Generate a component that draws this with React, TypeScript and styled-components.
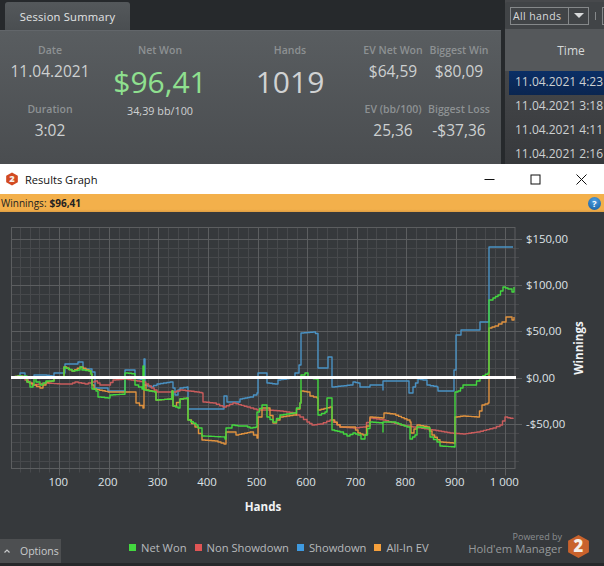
import React from "react";
import styled, { createGlobalStyle } from "styled-components";

const GlobalStyle = createGlobalStyle`
  html, body {
    margin: 0;
    padding: 0;
    width: 604px;
    height: 566px;
    overflow: hidden;
    background: #36393c;
    font-family: "Open Sans", "Liberation Sans", sans-serif;
  }
`;

const Page = styled.div`
  width: 604px;
  height: 566px;
  display: flex;
  flex-direction: column;
  overflow: hidden;
`;

const Session = styled.div`
  height: 164px;
  display: flex;
  background: #26292c;
  overflow: hidden;
  flex: none;
`;

const SummaryColumn = styled.div`
  width: 501px;
  display: flex;
  flex-direction: column;
`;

const TabBar = styled.div`
  height: 30px;
  padding: 2px 0 0 5px;
  box-sizing: border-box;
  display: flex;
`;

const Tab = styled.div`
  width: 125px;
  display: flex;
  align-items: center;
  justify-content: center;
  background: linear-gradient(#54585b, #4a4e51);
  border-radius: 3px 3px 0 0;
  color: #e2e4e5;
  font-size: 11.2px;
  letter-spacing: 0.2px;
`;

const SummaryPanel = styled.div`
  flex: 1;
  display: grid;
  grid-template-columns: 100px 120px 140px 66px 66px;
  grid-template-rows: 59px 53px;
  padding-top: 11px;
  background: linear-gradient(#595d60, #4a4d50);
  border-top: 1px solid #62666a;
  box-sizing: border-box;
`;

const Stat = styled.div<{ $tall?: boolean; $column?: number; $row?: number }>`
  display: flex;
  flex-direction: column;
  align-items: center;
  grid-column: ${(p) => p.$column ?? "auto"};
  grid-row: ${(p) => (p.$tall ? "1 / span 2" : p.$row ?? "auto")};
`;

const StatLabel = styled.div`
  color: #8d9193;
  font-size: 10.5px;
  font-weight: 600;
  line-height: 16px;
  white-space: nowrap;
`;

const StatValue = styled.div`
  color: #cdd0d1;
  font-size: 15.5px;
  line-height: 26px;
  white-space: nowrap;
`;

const BigValue = styled.div<{ $green?: boolean }>`
  color: ${(p) => (p.$green ? "#8fe08f" : "#d0d2d3")};
  font-size: 30px;
  line-height: 42px;
  margin-top: 3px;
`;

const BigNote = styled.div`
  color: #cfd1d2;
  font-size: 10.8px;
  line-height: 16px;
`;

const SessionList = styled.div`
  width: 99px;
  margin-left: 4px;
  display: flex;
  flex-direction: column;
  overflow: hidden;
  background: #47494c;
`;

const Toolbar = styled.div`
  height: 27px;
  flex: none;
  margin-top: 2px;
  padding-left: 5px;
  display: flex;
  align-items: center;
  background: #414447;
  border-radius: 3px 0 0 3px;
  box-sizing: border-box;
`;

const Select = styled.div`
  height: 18px;
  width: 79px;
  flex: none;
  display: flex;
  border: 1px solid #85888a;
  box-sizing: border-box;
  color: #d8dadb;
  font-size: 10.5px;
  letter-spacing: 0.4px;
`;

const SelectText = styled.div`
  flex: 1;
  line-height: 16px;
  padding-left: 2px;
  white-space: nowrap;
`;

const SelectArrow = styled.div`
  width: 19px;
  border-left: 1px solid #85888a;
  display: flex;
  align-items: center;
  justify-content: center;
  &::after {
    content: "";
    border-style: solid;
    border-width: 5px 5px 0;
    border-color: #d8dadb transparent transparent;
  }
`;

const ToolSeparator = styled.div`
  width: 1px;
  height: 8px;
  margin: 0 6px;
  flex: none;
  background: #85888a;
`;

const ToolStub = styled.div`
  width: 18px;
  height: 18px;
  flex: none;
  border: 1px solid #85888a;
  box-sizing: border-box;
`;

const ListHeader = styled.div`
  height: 42px;
  flex: none;
  display: flex;
  align-items: center;
  justify-content: center;
  padding-left: 33px;
  background: #55585b;
  color: #d6d8d9;
  font-size: 12px;
`;

const Rows = styled.div`
  padding-left: 4px;
  background: linear-gradient(#45474a, #36383b);
  flex: 1;
`;

const Row = styled.div<{ $selected?: boolean }>`
  height: 24px;
  line-height: 22px;
  padding-left: 6px;
  white-space: nowrap;
  font-size: 12px;
  color: #cdd0d1;
  background: ${(p) => (p.$selected ? "linear-gradient(#0b2f66, #0a2550)" : "transparent")};
`;

const Window = styled.div`
  flex: 1;
  display: flex;
  flex-direction: column;
  min-height: 0;
`;

const TitleBar = styled.div`
  height: 30px;
  flex: none;
  display: flex;
  align-items: center;
  padding-left: 5px;
  background: #ffffff;
  color: #111111;
  font-size: 11.1px;
  gap: 6px;
`;

const WindowButtons = styled.div`
  margin-left: auto;
  display: flex;
`;

const WindowButton = styled.div`
  width: 46px;
  height: 30px;
  display: flex;
  align-items: center;
  justify-content: center;
`;

const InfoBar = styled.div`
  height: 18px;
  flex: none;
  display: flex;
  align-items: center;
  padding: 0 3px 0 1px;
  background: linear-gradient(#f3b04b 85%, #dd9d42);
  color: #222222;
  font-size: 10px;
  gap: 3px;
`;

const InfoValue = styled.span`
  font-weight: 700;
`;

const HelpBadge = styled.div`
  margin-left: auto;
  width: 13px;
  height: 13px;
  border-radius: 50%;
  background: radial-gradient(circle at 50% 30%, #4f9fe0, #125a9e);
  color: #ffffff;
  font-size: 9px;
  font-weight: 700;
  line-height: 13px;
  text-align: center;
`;

const ChartArea = styled.svg`
  display: block;
  width: 604px;
  height: 319px;
  flex: none;
`;

const AxisText = styled.text`
  fill: #dfe3e7;
  font-size: 11.4px;
  font-family: "Open Sans", "Liberation Sans", sans-serif;
`;

const AxisTitle = styled.text`
  fill: #f0f2f4;
  font-size: 11.6px;
  font-weight: 700;
  font-family: "Open Sans", "Liberation Sans", sans-serif;
`;

const Footer = styled.div`
  height: 32px;
  flex: none;
  display: flex;
  align-items: flex-end;
`;

const OptionsButton = styled.div`
  width: 61px;
  height: 24px;
  flex: none;
  display: flex;
  align-items: center;
  gap: 9px;
  padding-left: 3px;
  box-sizing: border-box;
  background: #4d4f51;
  color: #c9cbcc;
  font-size: 10.5px;
`;

const Legend = styled.div`
  display: flex;
  align-items: center;
  gap: 8px;
  margin-left: 68px;
  height: 24px;
  padding-bottom: 7px;
  box-sizing: border-box;
`;

const LegendItem = styled.div`
  display: flex;
  align-items: center;
  gap: 5px;
  color: #b7babc;
  font-size: 11.2px;
  white-space: nowrap;
`;

const Swatch = styled.span<{ $color: string }>`
  width: 7px;
  height: 7px;
  background: ${(p) => p.$color};
`;

const Brand = styled.div`
  margin-left: auto;
  padding-right: 13px;
  display: flex;
  align-items: center;
  gap: 4px;
  height: 30px;
  align-self: flex-start;
`;

const BrandText = styled.div`
  display: flex;
  flex-direction: column;
  align-items: flex-end;
  align-self: flex-start;
`;

const PoweredBy = styled.div`
  color: #8b8e90;
  font-size: 9px;
  line-height: 12px;
`;

const BrandName = styled.div`
  color: #96999b;
  font-size: 11.3px;
  line-height: 12px;
  white-space: nowrap;
`;

const BottomEdge = styled.div`
  height: 3px;
  flex: none;
  background: #26282a;
`;

const GREEN = "#43d83f";
const RED = "#c95c5c";
const BLUE = "#4a92c4";
const ORANGE = "#e0923f";

type Pt = [number, number];

const netWon: Pt[] = [
  [12, 377], [18, 376], [22, 378], [24, 376], [27, 382], [30, 387], [33, 385], [34, 378], [36, 382], [40, 385], [46, 381],
  [52, 381], [54, 378], [62, 378], [64, 367], [65, 368], [72, 371], [78, 370], [80, 367], [82, 370], [89, 371], [91, 374],
  [92, 389], [96, 391], [98, 397], [108, 398], [110, 395], [125, 394], [125, 373], [135, 374], [135, 385], [142, 389],
  [143, 366], [144, 390], [155, 392], [156, 400], [170, 399], [172, 391], [173, 406], [178, 408], [180, 399], [187, 398],
  [188, 420], [196, 425], [198, 428], [202, 436], [224, 437], [225, 439], [226, 428], [230, 428], [232, 425], [238, 426],
  [245, 426], [250, 428], [256, 427], [257, 412], [262, 405], [266, 405], [267, 417], [273, 422], [280, 415], [293, 413],
  [300, 403], [301, 375], [305, 373], [308, 378], [316, 379], [318, 415], [325, 412], [327, 398], [331, 398], [332, 430],
  [340, 432], [347, 436], [353, 433], [358, 435], [361, 439], [365, 435], [370, 422], [382, 423], [383, 432], [383, 422],
  [393, 422], [407, 427], [409, 427], [410, 439], [415, 435], [417, 427], [427, 428], [430, 437], [437, 442], [440, 446],
  [454, 447], [455, 392], [458, 391], [463, 385], [473, 385], [480, 377], [488, 373], [489, 300], [493, 298], [498, 295],
  [503, 287], [508, 289], [512, 292], [514, 287],
];

const showdown: Pt[] = [
  [12, 377], [20, 377], [20, 373], [24, 373], [25, 378], [33, 378], [34, 375], [44, 375], [52, 376], [54, 373], [63, 373],
  [65, 364], [75, 364], [78, 362], [82, 362], [83, 369], [90, 369], [92, 372], [95, 388], [107, 388], [108, 391], [125, 391],
  [125, 370], [135, 370], [135, 378], [143, 380], [144, 359], [145, 359], [145, 385], [150, 387], [157, 384], [170, 382],
  [173, 388], [175, 395], [178, 390], [180, 388], [187, 387], [188, 409], [222, 409], [224, 396], [227, 402], [236, 402],
  [240, 399], [245, 398], [250, 397], [257, 393], [258, 373], [266, 373], [267, 383], [275, 384], [278, 380], [292, 378],
  [295, 373], [299, 365], [301, 333], [313, 332], [318, 335], [318, 368], [326, 368], [328, 357], [331, 357], [332, 387],
  [350, 385], [353, 382], [358, 383], [360, 387], [367, 387], [370, 385], [380, 385], [383, 390], [383, 381], [407, 381],
  [409, 393], [413, 387], [418, 379], [423, 380], [427, 385], [437, 387], [438, 391], [453, 391], [454, 370], [456, 335],
  [460, 335], [461, 330], [478, 330], [480, 322], [489, 322], [489, 247], [513, 247],
];

const nonShowdown: Pt[] = [
  [12, 377], [20, 376], [25, 380], [32, 385], [45, 383], [60, 384], [70, 384], [75, 382], [85, 384], [95, 381], [100, 385],
  [108, 385], [113, 380], [125, 379], [143, 382], [157, 392], [173, 392], [180, 390], [197, 392], [202, 393], [203, 402],
  [213, 403], [223, 407], [233, 403], [247, 407], [257, 410], [267, 410], [280, 411], [293, 413], [300, 417], [307, 422],
  [312, 425], [320, 424], [330, 420], [340, 427], [353, 428], [363, 427], [370, 418], [383, 420], [400, 425], [413, 427],
  [433, 430], [450, 433], [463, 434], [477, 432], [493, 428], [500, 425], [505, 417], [513, 419],
];

const allInEv: Pt[] = [
  [12, 377], [18, 376], [24, 377], [27, 382], [33, 385], [40, 388], [46, 382], [52, 381], [54, 378], [62, 378], [64, 367],
  [72, 371], [80, 367], [89, 371], [91, 374], [92, 385], [94, 389], [108, 392], [125, 392], [135, 392], [136, 403], [143, 408],
  [144, 408], [144, 385], [146, 390], [155, 392], [156, 400], [170, 399], [172, 391], [173, 406], [180, 399], [187, 398],
  [188, 420], [195, 427], [202, 440], [215, 441], [224, 444], [226, 432], [232, 432], [236, 435], [250, 432], [257, 438],
  [258, 417], [262, 408], [267, 408], [273, 423], [280, 417], [293, 415], [300, 403], [301, 391], [307, 392], [310, 396],
  [317, 398], [318, 410], [330, 407], [332, 420], [340, 427], [353, 427], [358, 433], [363, 435], [370, 417], [382, 418],
  [384, 413], [393, 414], [407, 420], [410, 422], [411, 433], [417, 425], [427, 427], [432, 435], [440, 442], [453, 443],
  [455, 417], [463, 416], [477, 417], [482, 405], [488, 403], [489, 328], [495, 326], [502, 322], [506, 317], [510, 317],
  [512, 320], [514, 317],
];

const stepPath = (pts: Pt[]) => {
  let d = `M${pts[0][0]} ${pts[0][1]}`;
  for (let i = 1; i < pts.length; i++) {
    const [x0, y0] = pts[i - 1];
    const [x1, y1] = pts[i];
    const n = Math.max(1, Math.round((x1 - x0) / 3));
    for (let k = 1; k <= n; k++) {
      d += `H${(x0 + ((x1 - x0) * k) / n).toFixed(1)}V${(y0 + ((y1 - y0) * k) / n).toFixed(1)}`;
    }
  }
  return d;
};

const PLOT = { left: 11.5, right: 515, top: 227.5, bottom: 468.5 };
const xAt = (hands: number) => 9.75 + hands * 0.4955;
const yAt = (money: number) => 377.5 - money * 0.924;

const xMinor = Array.from({ length: 50 }, (_, i) => (i + 1) * 20).filter((h) => h % 100 !== 0);
const xMajor = [100, 200, 300, 400, 500, 600, 700, 800, 900, 1000];
const yMinor = Array.from({ length: 25 }, (_, i) => -90 + i * 10).filter((m) => m % 50 !== 0);
const yMajor = [150, 100, 50, 0, -50];
const yLabels = ["$150,00", "$100,00", "$50,00", "$0,00", "-$50,00"];
const xLabels = ["100", "200", "300", "400", "500", "600", "700", "800", "900", "1 000"];

const Graph = () => (
  <ChartArea viewBox="0 212 604 319">
    <g stroke="#47494c" strokeWidth="1" fill="none">
      {xMinor.map((h) => (
        <path key={h} d={`M${Math.round(xAt(h)) + 0.5} ${PLOT.top}V${PLOT.bottom + 4}`} />
      ))}
      {yMinor.map((m) => (
        <path key={m} d={`M${PLOT.left} ${Math.round(yAt(m)) + 0.5}H${PLOT.right + 4}`} />
      ))}
    </g>
    <g stroke="#5c5e60" strokeWidth="1" fill="none">
      {xMajor.map((h) => (
        <path key={h} d={`M${Math.round(xAt(h)) + 0.5} ${PLOT.top}V${PLOT.bottom + 7}`} />
      ))}
      {yMajor.map((m) => (
        <path key={m} d={`M${PLOT.left} ${Math.round(yAt(m)) + 0.5}H${PLOT.right + 7}`} />
      ))}
      <rect x={PLOT.left} y={PLOT.top} width={PLOT.right - PLOT.left} height={PLOT.bottom - PLOT.top} />
    </g>
    <g fill="none" strokeWidth="1.4" strokeLinejoin="round">
      <path d={stepPath(showdown)} stroke={BLUE} />
      <path d={stepPath(nonShowdown)} stroke={RED} />
      <path d={stepPath(allInEv)} stroke={ORANGE} />
      <path d={stepPath(netWon)} stroke={GREEN} />
    </g>
    <rect x={11} y={376} width={505} height={3} fill="#ffffff" />
    {xLabels.map((label, i) => (
      <AxisText key={label} x={xAt(xMajor[i]) - 1} y={486} textAnchor="middle">
        {label}
      </AxisText>
    ))}
    {yLabels.map((label, i) => (
      <AxisText key={label} x={526} y={yAt(yMajor[i]) + 4}>
        {label}
      </AxisText>
    ))}
    <AxisTitle x={263} y={511} textAnchor="middle">
      Hands
    </AxisTitle>
    <AxisTitle x={0} y={0} textAnchor="middle" transform="translate(583 348) rotate(-90)">
      Winnings
    </AxisTitle>
  </ChartArea>
);

const Logo = ({ size, color }: { size: number; color: string }) => (
  <svg width={size} height={size} viewBox="0 0 24 24">
    <polygon points="12,1 22,6.5 22,17.5 12,23 2,17.5 2,6.5" fill={color} />
    <text
      x="12"
      y="17.5"
      textAnchor="middle"
      fontSize="16"
      fontWeight="800"
      fontFamily="'Open Sans', sans-serif"
      fill="#f5efe9"
    >
      2
    </text>
  </svg>
);

const times = ["11.04.2021 4:23", "11.04.2021 3:18", "11.04.2021 4:11", "11.04.2021 2:16"];

const legend: [string, string][] = [
  [GREEN, "Net Won"],
  ["#e05555", "Non Showdown"],
  ["#3f9ae0", "Showdown"],
  ["#f5a03c", "All-In EV"],
];

export default function App() {
  return (
    <Page>
      <GlobalStyle />
      <Session>
        <SummaryColumn>
          <TabBar>
            <Tab>Session Summary</Tab>
          </TabBar>
          <SummaryPanel>
            <Stat $column={1} $row={1}>
              <StatLabel>Date</StatLabel>
              <StatValue>11.04.2021</StatValue>
            </Stat>
            <Stat $column={2} $tall>
              <StatLabel>Net Won</StatLabel>
              <BigValue $green>$96,41</BigValue>
              <BigNote>34,39 bb/100</BigNote>
            </Stat>
            <Stat $column={3} $tall>
              <StatLabel>Hands</StatLabel>
              <BigValue>1019</BigValue>
            </Stat>
            <Stat $column={4} $row={1}>
              <StatLabel>EV Net Won</StatLabel>
              <StatValue>$64,59</StatValue>
            </Stat>
            <Stat $column={5} $row={1}>
              <StatLabel>Biggest Win</StatLabel>
              <StatValue>$80,09</StatValue>
            </Stat>
            <Stat $column={1} $row={2}>
              <StatLabel>Duration</StatLabel>
              <StatValue>3:02</StatValue>
            </Stat>
            <Stat $column={4} $row={2}>
              <StatLabel>EV (bb/100)</StatLabel>
              <StatValue>25,36</StatValue>
            </Stat>
            <Stat $column={5} $row={2}>
              <StatLabel>Biggest Loss</StatLabel>
              <StatValue>-$37,36</StatValue>
            </Stat>
          </SummaryPanel>
        </SummaryColumn>
        <SessionList>
          <Toolbar>
            <Select>
              <SelectText>All hands</SelectText>
              <SelectArrow />
            </Select>
            <ToolSeparator />
            <ToolStub />
          </Toolbar>
          <ListHeader>Time</ListHeader>
          <Rows>
            {times.map((t, i) => (
              <Row key={t} $selected={i === 0}>
                {t}
              </Row>
            ))}
          </Rows>
        </SessionList>
      </Session>
      <Window>
        <TitleBar>
          <Logo size={14} color="#d24a22" />
          Results Graph
          <WindowButtons>
            <WindowButton>
              <svg width="11" height="11" viewBox="0 0 11 11">
                <path d="M0.5 5.5H10.5" stroke="#111" fill="none" />
              </svg>
            </WindowButton>
            <WindowButton>
              <svg width="11" height="11" viewBox="0 0 11 11">
                <rect x="1" y="1" width="9" height="9" stroke="#111" fill="none" />
              </svg>
            </WindowButton>
            <WindowButton>
              <svg width="11" height="11" viewBox="0 0 11 11">
                <path d="M0.5 0.5L10.5 10.5M10.5 0.5L0.5 10.5" stroke="#111" fill="none" />
              </svg>
            </WindowButton>
          </WindowButtons>
        </TitleBar>
        <InfoBar>
          Winnings: <InfoValue>$96,41</InfoValue>
          <HelpBadge>?</HelpBadge>
        </InfoBar>
        <Graph />
        <Footer>
          <OptionsButton>
            <svg width="8" height="6" viewBox="0 0 8 6">
              <path d="M1.5 4.5L4 2L6.5 4.5" stroke="#c9cbcc" strokeWidth="1.2" fill="none" />
            </svg>
            Options
          </OptionsButton>
          <Legend>
            {legend.map(([color, name]) => (
              <LegendItem key={name}>
                <Swatch $color={color} />
                {name}
              </LegendItem>
            ))}
          </Legend>
          <Brand>
            <BrandText>
              <PoweredBy>Powered by</PoweredBy>
              <BrandName>Hold'em Manager</BrandName>
            </BrandText>
            <Logo size={25} color="#c9622c" />
          </Brand>
        </Footer>
        <BottomEdge />
      </Window>
    </Page>
  );
}
